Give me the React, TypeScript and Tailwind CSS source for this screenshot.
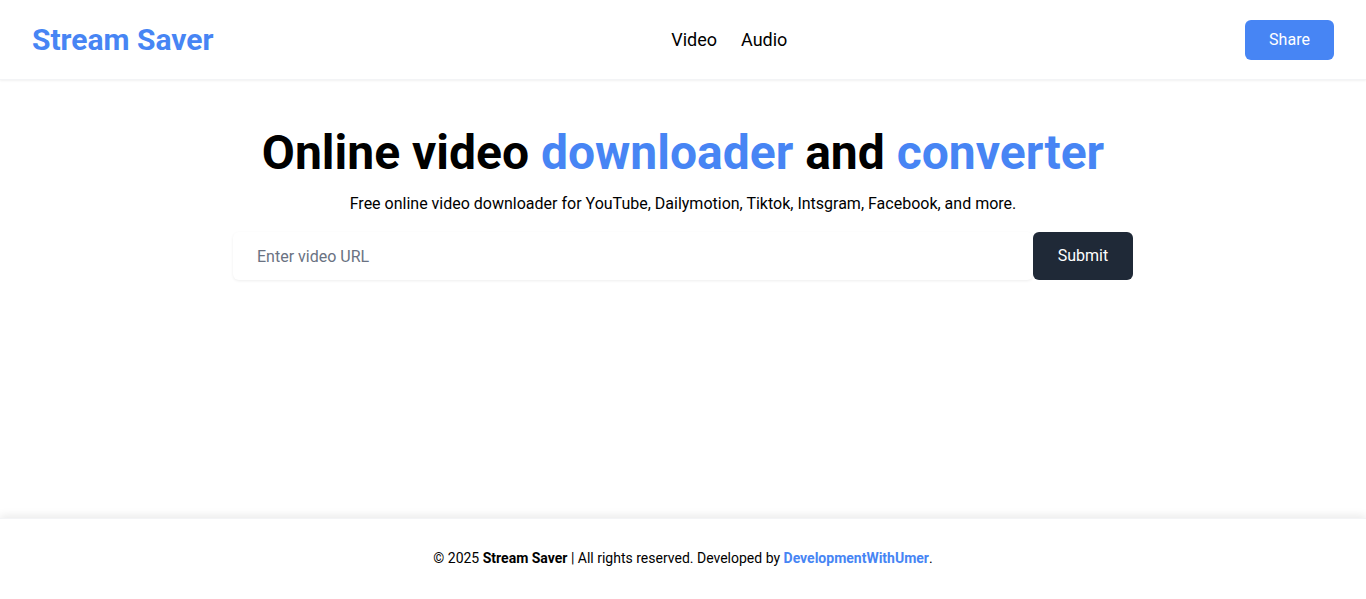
import React, { useState } from 'react';

export default function App() {
  const [url, setUrl] = useState('');

  return (
    <div className="min-h-screen flex flex-col bg-white text-black font-['Roboto',sans-serif]">
      <header className="h-20 px-8 flex items-center justify-between shadow-[0_1px_2px_rgba(0,0,0,0.06)] border-b border-gray-100">
        <div className="text-[30px] font-bold text-[#4785f4] leading-9">Stream Saver</div>
        <nav className="flex items-center gap-6 text-lg">
          <a className="cursor-pointer">Video</a>
          <a className="cursor-pointer">Audio</a>
        </nav>
        <button className="w-[89px] h-10 rounded-md bg-[#4785f4] text-white text-base">Share</button>
      </header>

      <main className="flex-1 flex flex-col items-center pt-[49px]">
        <h1 className="text-5xl leading-none font-bold text-center">
          Online video <span className="text-[#4785f4]">downloader</span> and{' '}
          <span className="text-[#4785f4]">converter</span>
        </h1>
        <p className="mt-[15px] text-base leading-6">
          Free online video downloader for YouTube, Dailymotion, Tiktok, Intsgram, Facebook, and more.
        </p>
        <form
          className="mt-4 w-[900px] flex"
          onSubmit={(e) => e.preventDefault()}
        >
          <input
            type="text"
            value={url}
            onChange={(e) => setUrl(e.target.value)}
            placeholder="Enter video URL"
            className="flex-1 h-12 px-6 rounded-md shadow-[0_1px_3px_rgba(0,0,0,0.07)] text-base placeholder:text-gray-500 outline-none"
          />
          <button type="submit" className="w-[100px] h-12 rounded-md bg-[#1f2937] text-white text-base">
            Submit
          </button>
        </form>
      </main>

      <footer className="pt-[29px] pb-[31px] text-center text-sm leading-5 shadow-[0_-3px_8px_rgba(0,0,0,0.08)] border-t border-gray-100">
        © 2025 <span className="font-bold">Stream Saver</span> | All rights reserved. Developed by{' '}
        <a className="font-bold text-[#4785f4]">DevelopmentWithUmer</a>.
      </footer>
    </div>
  );
}
